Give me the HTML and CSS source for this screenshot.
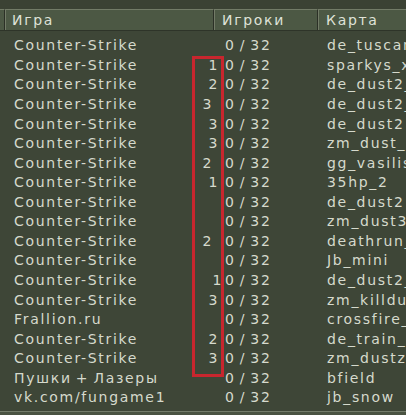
FILE: index.html
```html
<!DOCTYPE html>
<html lang="ru">
<head>
<meta charset="utf-8">
<title>Серверы</title>
<link rel="stylesheet" href="styles.css">
</head>
<body>
<div class="browser">
  <div class="topstrip"></div>
  <div class="header">
    <div class="hcell hc0"></div>
    <div class="hcell hc1">Игра</div>
    <div class="hcell hc2">Игроки</div>
    <div class="hcell hc3">Карта</div>
  </div>
  <div class="rows">
    <div class="row"><span class="name">Counter-Strike</span><span class="bots"></span><span class="players">0 / 32</span><span class="map">de_tuscan_x</span></div>
    <div class="row"><span class="name">Counter-Strike</span><span class="bots b-mid">1</span><span class="players">0 / 32</span><span class="map">sparkys_xmas</span></div>
    <div class="row"><span class="name">Counter-Strike</span><span class="bots b-mid">2</span><span class="players">0 / 32</span><span class="map">de_dust2_2x2</span></div>
    <div class="row"><span class="name">Counter-Strike</span><span class="bots b-far">3</span><span class="players">0 / 32</span><span class="map">de_dust2_2x2</span></div>
    <div class="row"><span class="name">Counter-Strike</span><span class="bots b-mid">3</span><span class="players">0 / 32</span><span class="map">de_dust2</span></div>
    <div class="row"><span class="name">Counter-Strike</span><span class="bots b-mid">3</span><span class="players">0 / 32</span><span class="map">zm_dust_world</span></div>
    <div class="row"><span class="name">Counter-Strike</span><span class="bots b-far">2</span><span class="players">0 / 32</span><span class="map">gg_vasilisk</span></div>
    <div class="row"><span class="name">Counter-Strike</span><span class="bots b-mid">1</span><span class="players">0 / 32</span><span class="map">35hp_2</span></div>
    <div class="row"><span class="name">Counter-Strike</span><span class="bots"></span><span class="players">0 / 32</span><span class="map">de_dust2</span></div>
    <div class="row"><span class="name">Counter-Strike</span><span class="bots"></span><span class="players">0 / 32</span><span class="map">zm_dust3</span></div>
    <div class="row"><span class="name">Counter-Strike</span><span class="bots b-far">2</span><span class="players">0 / 32</span><span class="map">deathrun_temple</span></div>
    <div class="row"><span class="name">Counter-Strike</span><span class="bots"></span><span class="players">0 / 32</span><span class="map">Jb_mini</span></div>
    <div class="row"><span class="name">Counter-Strike</span><span class="bots b-near">1</span><span class="players">0 / 32</span><span class="map">de_dust2_long</span></div>
    <div class="row"><span class="name">Counter-Strike</span><span class="bots b-mid">3</span><span class="players">0 / 32</span><span class="map">zm_killdust</span></div>
    <div class="row"><span class="name">Frallion.ru</span><span class="bots"></span><span class="players">0 / 32</span><span class="map">crossfire_pro</span></div>
    <div class="row"><span class="name">Counter-Strike</span><span class="bots b-mid">2</span><span class="players">0 / 32</span><span class="map">de_train_new</span></div>
    <div class="row"><span class="name">Counter-Strike</span><span class="bots b-mid">3</span><span class="players">0 / 32</span><span class="map">zm_dustzone</span></div>
    <div class="row"><span class="name">Пушки + Лазеры</span><span class="bots"></span><span class="players">0 / 32</span><span class="map">bfield</span></div>
    <div class="row"><span class="name">vk.com/fungame1</span><span class="bots"></span><span class="players">0 / 32</span><span class="map">jb_snow</span></div>
  </div>
  <div class="footer"></div>
  <div class="highlight"></div>
</div>
</body>
</html>
```

FILE: styles.css
```css
html, body {
  margin: 0;
  padding: 0;
  background: #3e4637;
  overflow: hidden;
}

.browser {
  position: relative;
  width: 406px;
  height: 415px;
  overflow: hidden;
  font-family: "DejaVu Sans", Verdana, sans-serif;
  font-size: 14px;
  letter-spacing: 1.7px;
  word-spacing: -2px;
  color: #d6dacd;
}

.topstrip {
  height: 9px;
  background: #3b4234;
}

.header {
  display: flex;
  height: 22px;
  box-sizing: border-box;
  border-bottom: 1px solid #2e3429;
}

.hcell {
  box-sizing: border-box;
  height: 21px;
  line-height: 20px;
  background: #4c5844;
  border-top: 1px solid #727b67;
  border-left: 1px solid #727b67;
  border-right: 1px solid #2b3026;
  color: #dfe2d8;
  white-space: nowrap;
  overflow: hidden;
}

.hc0 { width: 5px; border-left: none; }
.hc1 { width: 209px; padding-left: 6px; }
.hc2 { width: 104px; padding-left: 7px; }
.hc3 { flex: 1; padding-left: 7px; border-right: none; }

.rows {
  padding-top: 5.4px;
}

.row {
  display: grid;
  grid-template-columns: 190px 35px 93px 1fr;
  height: 19.55px;
  line-height: 19.55px;
  white-space: nowrap;
}

.row span {
  overflow: hidden;
}

.name { padding-left: 14px; }

.bots {
  text-align: right;
  padding-right: 6px;
}
.bots.b-far { padding-right: 12px; }
.bots.b-mid { padding-right: 6px; }
.bots.b-near { padding-right: 2px; }

.players { padding-left: 0; }

.map { padding-left: 9px; }

.footer {
  margin-top: 3px;
  height: 5px;
  border-top: 1px solid #737c6a;
  background: #4a5342;
}

.highlight {
  position: absolute;
  left: 192px;
  top: 56px;
  width: 32px;
  height: 321px;
  box-sizing: border-box;
  border: 3px solid #c8262e;
}
```
